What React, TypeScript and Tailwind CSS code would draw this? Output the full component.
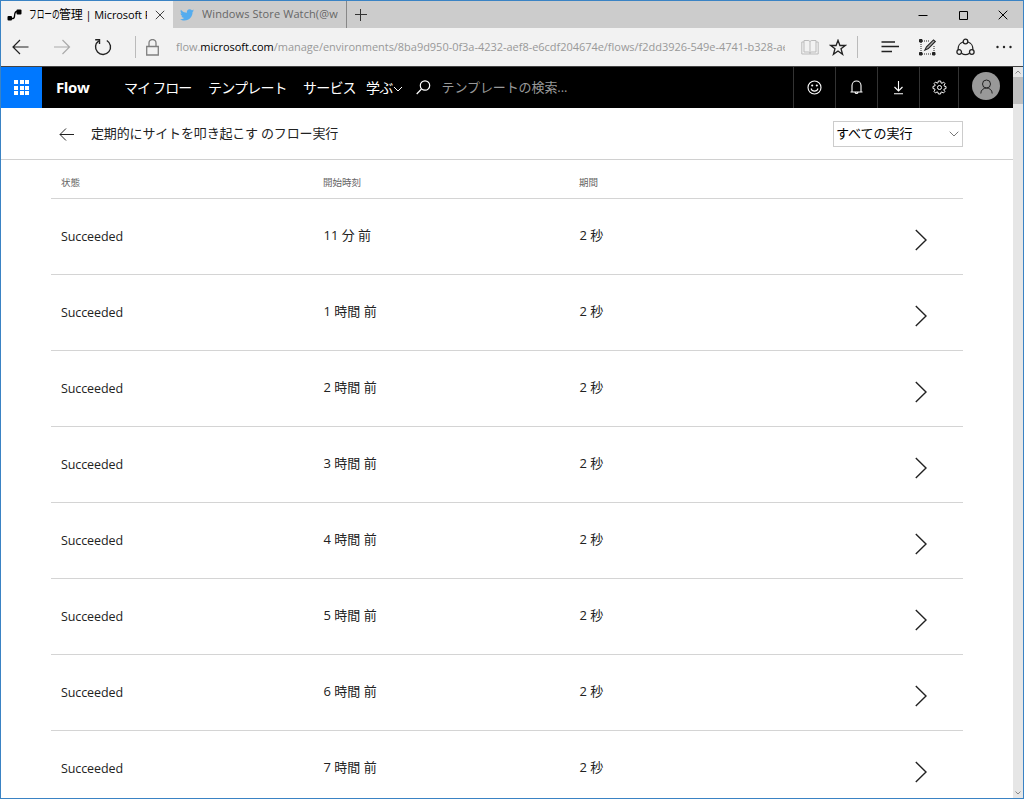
import type { ReactNode } from "react";
import clsx from "clsx";

const runs = [
  { status: "Succeeded", start: "11 分 前", duration: "2 秒" },
  { status: "Succeeded", start: "1 時間 前", duration: "2 秒" },
  { status: "Succeeded", start: "2 時間 前", duration: "2 秒" },
  { status: "Succeeded", start: "3 時間 前", duration: "2 秒" },
  { status: "Succeeded", start: "4 時間 前", duration: "2 秒" },
  { status: "Succeeded", start: "5 時間 前", duration: "2 秒" },
  { status: "Succeeded", start: "6 時間 前", duration: "2 秒" },
  { status: "Succeeded", start: "7 時間 前", duration: "2 秒" },
];

type IconProps = {
  width: number;
  height: number;
  className?: string;
  stroke?: number;
  children: ReactNode;
};

const Icon = ({ width, height, className, stroke = 1, children }: IconProps) => (
  <svg
    width={width}
    height={height}
    viewBox={`0 0 ${width} ${height}`}
    fill="none"
    stroke="currentColor"
    strokeWidth={stroke}
    className={clsx("shrink-0", className)}
  >
    {children}
  </svg>
);

const TabStrip = () => (
  <div className="flex h-[27px] shrink-0 bg-[#cccccc] text-xs">
    <div className="flex w-[172px] items-center bg-[#f2f2f2] pl-[6px] text-black">
      <Icon width={16} height={12}>
        <path d="M3 9.5H6C9 9.5 6 2.5 10 2.5H12" stroke="#000" strokeWidth={1.3} />
        <rect x="0.5" y="7" width="4.5" height="4.5" rx="1" fill="#000" stroke="none" />
        <rect x="9.5" y="0.5" width="5" height="5" rx="1" fill="#000" stroke="none" />
      </Icon>
      <div className="ml-[6px] flex w-[118px] items-baseline overflow-hidden whitespace-nowrap">
        <span className="w-[30px] shrink-0">
          <span className="inline-block origin-left scale-x-[0.64]">フローの</span>
        </span>
        <span className="tracking-[-0.2px]">管理</span>
        <span className="ml-[3px] text-[11px] tracking-[-0.1px]">| Microsoft Flow</span>
      </div>
      <Icon width={10} height={10} className="ml-[8px] text-[#444]">
        <path d="M0.8 0.8L9.2 9.2M9.2 0.8L0.8 9.2" />
      </Icon>
    </div>
    <div className="flex w-[174px] items-center border-r border-[#888] pl-[7px] text-[#666]">
      <svg width="14" height="12" viewBox="0 0 24 20" className="shrink-0" fill="#55acee">
        <path d="M24 2.4c-.9.4-1.8.7-2.8.8 1-.6 1.8-1.6 2.2-2.7-1 .6-2 1-3.1 1.2C19.3.7 18 .1 16.6.1c-3.2 0-5.5 2.9-4.8 6C7.7 5.9 4 3.9 1.6.9.3 3.1.9 6 3.1 7.5c-.8 0-1.6-.2-2.2-.6 0 2.3 1.6 4.400 3.900 4.900-.7.2-1.500.2-2.200.1.6 2 2.400 3.400 4.600 3.400C5.200 16.900 2.600 17.600 0 17.300 2.200 18.700 4.800 19.500 7.500 19.500c9.100 0 14.300-7.700 14-14.600 1-.7 1.800-1.600 2.500-2.500z" />
      </svg>
      <span className="ml-[8px] w-[136px] overflow-hidden whitespace-nowrap text-[11px] tracking-[0.1px]">
        Windows Store Watch(@winstore)
      </span>
    </div>
    <div className="flex items-center pl-2 text-[#333]">
      <Icon width={12} height={12}>
        <path d="M0 5.5H12M5.5 0V12" />
      </Icon>
    </div>
    <div className="ml-auto flex items-center gap-[30px] pr-[15px] text-black">
      <Icon width={10} height={10}>
        <path d="M0.5 5.5H9.5" />
      </Icon>
      <Icon width={10} height={10}>
        <path d="M1.5 1.5H9.5V9.5H1.5Z" />
      </Icon>
      <Icon width={10} height={10}>
        <path d="M0.7 0.7L9.3 9.3M9.3 0.7L0.7 9.3" />
      </Icon>
    </div>
  </div>
);

const AddressBar = () => (
  <div className="flex h-[39px] shrink-0 items-center border-b border-[#444] bg-[#f2f2f2] pl-[11px] text-[#222]">
    <Icon width={17} height={16} stroke={1.2}>
      <path d="M16.5 8H1M8 1L1 8L8 15" />
    </Icon>
    <Icon width={17} height={16} stroke={1.2} className="ml-[25px] text-[#aaa]">
      <path d="M0 8H15.5M8.5 1L15.5 8L8.5 15" />
    </Icon>
    <Icon width={18} height={18} stroke={1.4} className="ml-[23px]">
      <path d="M4.8 2.8A7.5 7.5 0 1 0 12.8 2.5" />
      <path d="M1.2 1.8H5.5V6" />
    </Icon>
    <div className="ml-[23px] h-[22px] w-px bg-[#bbb]" />
    <Icon width={13} height={17} stroke={1.3} className="ml-[10px] text-[#808080]">
      <path d="M0.7 7.5H12.3V16H0.7ZM3 7.5V4A3.5 3.5 0 0 1 10 4V7.5" />
    </Icon>
    <div className="ml-[17px] w-[609px] overflow-hidden whitespace-nowrap text-[11px] tracking-[-0.03px] text-[#999]">
      flow.<span className="text-black">microsoft.com</span>
      /manage/environments/8ba9d950-0f3a-4232-aef8-e6cdf204674e/flows/f2dd3926-549e-4741-b328-ae35
    </div>
    <Icon width={18} height={16} className="ml-4 text-[#bbb]">
      <path d="M3 1.5H7C8.3 1.5 9 2 9 3C9 2 9.7 1.5 11 1.5H15V13H11C9.7 13 9 13.5 9 14.5C9 13.5 8.3 13 7 13H3ZM9 3V14.5M3 3H0.8V15H17.2V3H15" />
    </Icon>
    <Icon width={18} height={17} stroke={1.3} className="ml-[10px] text-[#222]">
      <path d="M9 1.3L10.9 6.5H16.3L12 9.8L13.6 15.3L9 12L4.4 15.3L6 9.8L1.7 6.5H7.1Z" />
    </Icon>
    <div className="ml-[10px] h-[22px] w-px bg-[#bbb]" />
    <Icon width={18} height={12} stroke={1.3} className="ml-[23px]">
      <path d="M0.5 1H14M0.5 5.5H18M0.5 10.500H11" />
    </Icon>
    <Icon width={18} height={17} className="ml-[20px]">
      <path d="M3 2H11M2 3V14M3 15H14M15 7V14" strokeDasharray="1 1" />
      <path d="M0.5 0.5h2.500v2.500h-2.500zM0.500 13.500h2.500v2.500h-2.500zM13.500 13.500h2.500v2.500h-2.500z" fill="currentColor" />
      <path d="M5.800 11.200L7.500 7.800L14.500 0.900L16.300 2.500L9.300 9.600Z" fill="#aaa" strokeWidth={1.100} />
    </Icon>
    <Icon width={19} height={18} stroke={1.3} className="ml-[19px]">
      <circle cx="9.5" cy="3.5" r="2.3" />
      <circle cx="3.2" cy="14" r="2.3" />
      <circle cx="15.8" cy="14" r="2.3" />
      <path d="M7 4A7 7 0 0 0 2.3 11.8M12 4A7 7 0 0 1 16.7 11.8M5.5 15.3A7 7 0 0 0 13.5 15.3" />
    </Icon>
    <svg width="16" height="4" viewBox="0 0 16 4" className="ml-[21px] shrink-0" fill="currentColor">
      <circle cx="1.5" cy="2" r="1.2" />
      <circle cx="8" cy="2" r="1.2" />
      <circle cx="14.5" cy="2" r="1.2" />
    </svg>
  </div>
);

const NavButton = ({ className, children }: { className: string; children: ReactNode }) => (
  <div
    className={clsx(
      "flex h-full shrink-0 items-center justify-center border-l border-[#333]",
      className
    )}
  >
    {children}
  </div>
);

const FlowNav = () => (
  <nav className="flex h-[41px] shrink-0 items-center bg-black text-white">
    <div className="flex h-full w-[41px] shrink-0 items-center justify-center bg-[#0078ff]">
      <div className="grid grid-cols-3 gap-[1.5px]">
        {[...Array(9)].map((_, index) => (
          <span key={index} className="size-1 bg-white" />
        ))}
      </div>
    </div>
    <span className="ml-[14px] w-[68px] text-[15px] font-bold tracking-[-0.4px]">Flow</span>
    <span className="w-[84px] whitespace-nowrap text-[14px] tracking-[-1.1px]">マイ フロー</span>
    <span className="w-[95px] whitespace-nowrap text-[14px] tracking-[-0.8px]">テンプレート</span>
    <span className="w-[63px] whitespace-nowrap text-[14px] tracking-[-0.8px]">サービス</span>
    <span className="whitespace-nowrap text-[14px] tracking-[-0.7px]">学ぶ</span>
    <Icon width={10} height={6} className="mt-[3px]">
      <path d="M1 1L5 5L9 1" />
    </Icon>
    <Icon width={15} height={15} stroke={1.2} className="ml-[13px]">
      <circle cx="9" cy="5.5" r="4.7" />
      <path d="M5.5 9L0.7 14" />
    </Icon>
    <span className="ml-[11px] whitespace-nowrap text-[13px] tracking-[-0.1px] text-[#999]">
      テンプレートの検索...
    </span>
    <div className="ml-auto flex h-full">
      <NavButton className="w-[42px]">
        <Icon width={15} height={15} stroke={1.1}>
          <circle cx="7.5" cy="7.5" r="6.5" />
          <path d="M4 8.5C5 12 10 12 11 8.5" />
          <circle cx="5.2" cy="5.5" r="0.5" fill="currentColor" />
          <circle cx="9.8" cy="5.5" r="0.5" fill="currentColor" />
        </Icon>
      </NavButton>
      <NavButton className="w-[42px]">
        <Icon width={13} height={15} stroke={1.1}>
          <path d="M2 12V5.500A4.500 4.500 0 0 1 11 5.500V12M0.500 12H12.500M5 12.500A1.600 1.600 0 0 0 8 12.500" />
        </Icon>
      </NavButton>
      <NavButton className="w-[42px]">
        <Icon width={11} height={15} stroke={1.1}>
          <path d="M5.500 1V11M1.500 7L5.500 11L9.500 7M1 13.800H10" />
        </Icon>
      </NavButton>
      <NavButton className="w-[39px]">
        <Icon width={15} height={15}>
          <path d="M6.300 1H8.700L9 2.900L10 3.300L11.500 2.100L13 3.600L12 5.200L12.300 6.200L14 6.500V8.600L12.200 9L11.800 10L12.900 11.500L11.400 13L9.900 12L8.900 12.300L8.600 14H6.400L6 12.300L5 11.900L3.500 13L2 11.400L3 9.900L2.700 8.900L1 8.600V6.400L2.800 6L3.200 5L2.100 3.500L3.600 2L5.100 3.100L6 2.800Z" />
          <circle cx="7.5" cy="7.5" r="2" />
        </Icon>
      </NavButton>
      <NavButton className="w-[55px]">
        <div className="mb-[3px] flex size-7 items-center justify-center rounded-full bg-[#999] text-[#222]">
          <Icon width={13} height={15}>
            <circle cx="6.5" cy="5" r="4" />
            <path d="M0.8 14.5C0.8 7.2 12.2 7.2 12.2 14.5" />
          </Icon>
        </div>
      </NavButton>
    </div>
  </nav>
);

const RunsHeader = () => (
  <div className="flex h-[52px] shrink-0 items-center border-b border-[#d0d0d0] pl-[58px] pr-[50px]">
    <Icon width={15} height={13} className="mt-px text-[#222]">
      <path d="M15 6.5H1M7 0.5L1 6.5L7 12.5" />
    </Icon>
    <h1 className="ml-[17px] mt-px whitespace-nowrap text-[13px] tracking-[-0.15px] text-[#222]">
      定期的にサイトを叩き起こす のフロー実行
    </h1>
    <div className="ml-auto flex h-[26px] w-[130px] items-center justify-between border border-[#ccc] pl-[2px] pr-[3px] text-[13px] text-black">
      すべての実行
      <Icon width={10} height={6} className="text-[#777]">
        <path d="M0.7 0.7L5 5L9.3 0.7" />
      </Icon>
    </div>
  </div>
);

const RunsTable = () => (
  <div className="mx-[50px]">
    <div className="flex h-[39px] items-center border-b border-[#d4d4d4] pl-[10px] pt-[9px] text-[9.5px] text-[#666]">
      <span className="w-[262px]">状態</span>
      <span className="w-[256px]">開始時刻</span>
      <span>期間</span>
    </div>
    {runs.map((run) => (
      <div
        key={run.start}
        className="flex h-[76px] items-center border-b border-[#d4d4d4] pl-[10px] text-[13px] text-[#222]"
      >
        <span className="w-[262px] pt-[2px] text-[12.5px] tracking-[-0.1px]">{run.status}</span>
        <span className="w-[256px] pb-[2px] pl-[0.5px]">{run.start}</span>
        <span className="pb-[2px] pl-[0.5px]">{run.duration}</span>
        <Icon width={12} height={22} stroke={1.4} className="ml-auto mr-[36px] mt-[6px]">
          <path d="M0.8 1L11 11L0.8 21" />
        </Icon>
      </div>
    ))}
  </div>
);

const Scrollbar = () => (
  <div className="flex w-[10px] shrink-0 flex-col items-center bg-[#e6e6e6] text-[#888]">
    <Icon width={6} height={4} className="my-[3px]">
      <path d="M0.5 3.5L3 1L5.5 3.5" />
    </Icon>
    <div className="h-[27px] w-full bg-[#bfbfbf]" />
    <Icon width={6} height={4} className="mb-[3px] mt-auto">
      <path d="M0.5 0.5L3 3L5.5 0.5" />
    </Icon>
  </div>
);

const App = () => {
  return (
    <div className="flex h-[799px] w-[1024px] flex-col overflow-hidden border border-[#3a83c4] bg-white font-['Open_Sans','Noto_Sans_CJK_JP',sans-serif]">
      <TabStrip />
      <AddressBar />
      <div className="flex min-h-0 flex-1">
        <main className="flex min-w-0 flex-1 flex-col overflow-hidden">
          <FlowNav />
          <RunsHeader />
          <RunsTable />
        </main>
        <Scrollbar />
      </div>
    </div>
  );
};

export default App;
